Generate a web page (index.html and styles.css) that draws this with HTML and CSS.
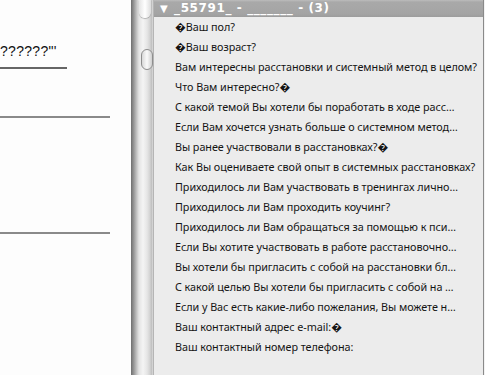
FILE: index.html
```html
<!DOCTYPE html>
<html lang="ru">
<head>
    <meta charset="UTF-8">
    <title>Вопросы анкеты</title>
    <link rel="stylesheet" href="styles.css">
</head>
<body>
    <div class="page">
        <div class="form-area">
            <div class="field-title">??????"'</div>
            <div class="rule rule-short"></div>
            <div class="rule rule-long rule-first"></div>
            <div class="rule rule-long rule-second"></div>
        </div>

        <div class="scroll-track">
            <div class="scroll-cap"></div>
            <div class="scroll-knob"></div>
        </div>

        <div class="panel">
            <div class="panel-header"><span class="arrow">▼</span> _55791_ - _______ - (3)</div>
            <ul class="question-list">
                <li>�Ваш пол?</li>
                <li>�Ваш возраст?</li>
                <li>Вам интересны расстановки и системный метод в целом?</li>
                <li>Что Вам интересно?�</li>
                <li>С какой темой Вы хотели бы поработать в ходе расс…</li>
                <li>Если Вам хочется узнать больше о системном метод…</li>
                <li>Вы ранее участвовали в расстановках?�</li>
                <li>Как Вы оцениваете свой опыт в системных расстановках?</li>
                <li>Приходилось ли Вам участвовать в тренингах лично…</li>
                <li>Приходилось ли Вам проходить коучинг?</li>
                <li>Приходилось ли Вам обращаться за помощью к пси…</li>
                <li>Если Вы хотите участвовать в работе расстановочно…</li>
                <li>Вы хотели бы пригласить с собой на расстановки бл…</li>
                <li>С какой целью Вы хотели бы пригласить с собой на …</li>
                <li>Если у Вас есть какие-либо пожелания, Вы можете н…</li>
                <li>Ваш контактный адрес e-mail:�</li>
                <li>Ваш контактный номер телефона:</li>
            </ul>
        </div>

        <div class="edge"></div>
    </div>
</body>
</html>
```

FILE: styles.css
```css
/* Survey question picker */
body {
    margin: 0;
    padding: 0;
    background-color: #fdfdfd;
    font-family: "DejaVu Sans", Verdana, sans-serif;
    overflow: hidden;
}

.page {
    display: flex;
    height: 375px;
    width: 485px;
}

.form-area {
    width: 131px;
    flex-shrink: 0;
    background-color: #fdfdfd;
    padding-top: 43px;
}

.field-title {
    font-family: "Liberation Sans", Arial, sans-serif;
    font-size: 14px;
    color: #111;
    height: 24px;
    letter-spacing: 0.3px;
}

.rule {
    height: 2px;
    background-color: #8a8a8a;
}

.rule-short {
    width: 67px;
    background-color: #666;
}

.rule-long {
    width: 110px;
}

.rule-first {
    margin-top: 47px;
}

.rule-second {
    margin-top: 114px;
}

.scroll-track {
    width: 22px;
    flex-shrink: 0;
    background: linear-gradient(to right, #6e6e6e 0px, #9a9a9a 3px, #c8c8c8 6px, #e4e4e4 8px, #f4f4f4 12px, #e6e6e6 16px, #d2d2d2 19px, #bdbdbd 21px, #e8e8e8 22px);
    position: relative;
}

.scroll-cap {
    position: absolute;
    left: 8px;
    top: 0;
    width: 12px;
    height: 18px;
    border-radius: 0 0 6px 6px;
    background: linear-gradient(to right, #e4e4e4, #fff 50%, #dcdcdc);
    box-shadow: 0 1px 1px rgba(0, 0, 0, 0.25);
}

.scroll-knob {
    position: absolute;
    left: 10px;
    top: 49px;
    width: 10px;
    height: 19px;
    border: 1px solid #8e8e8e;
    border-radius: 6px;
    background: linear-gradient(to right, #d8d8d8, #fafafa 50%, #cfcfcf);
}

.panel {
    flex: 1;
    background-color: #ececec;
    border-left: 1px solid #b5b5b5;
    border-right: 1px solid #8a8a8a;
    overflow: hidden;
}

.panel-header {
    height: 17px;
    line-height: 17px;
    padding-left: 6px;
    color: #fff;
    font-size: 12px;
    font-weight: bold;
    letter-spacing: 0.6px;
    background: linear-gradient(to bottom, #bcbcbc 0px, #a9a9a9 2px, #a4a4a4 14px, #9c9c9c 17px);
    white-space: nowrap;
}

.arrow {
    font-size: 10px;
    margin-right: 1px;
}

.question-list {
    list-style: none;
    margin: 0;
    padding: 0 2px 0 21px;
}

.question-list li {
    height: 20px;
    line-height: 20px;
    font-family: "Noto Sans", "DejaVu Sans", sans-serif;
    font-size: 10.8px;
    letter-spacing: -0.05px;
    color: #141414;
    white-space: nowrap;
    overflow: hidden;
    text-overflow: ellipsis;
}

.edge {
    width: 1px;
    flex-shrink: 0;
    background-color: #f2f2f2;
}
```
